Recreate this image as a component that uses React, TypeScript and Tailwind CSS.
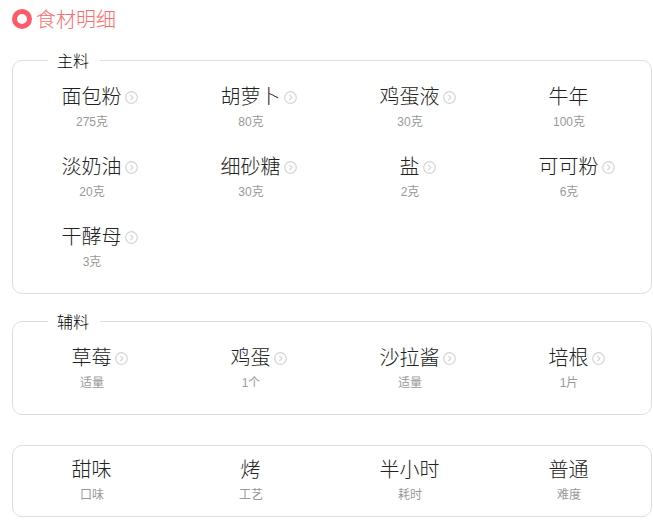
type Item = { name: string; sub: string; arrow?: boolean };

const mainItems: Item[] = [
  { name: "面包粉", sub: "275克", arrow: true },
  { name: "胡萝卜", sub: "80克", arrow: true },
  { name: "鸡蛋液", sub: "30克", arrow: true },
  { name: "牛年", sub: "100克" },
  { name: "淡奶油", sub: "20克", arrow: true },
  { name: "细砂糖", sub: "30克", arrow: true },
  { name: "盐", sub: "2克", arrow: true },
  { name: "可可粉", sub: "6克", arrow: true },
  { name: "干酵母", sub: "3克", arrow: true },
];

const sideItems: Item[] = [
  { name: "草莓", sub: "适量", arrow: true },
  { name: "鸡蛋", sub: "1个", arrow: true },
  { name: "沙拉酱", sub: "适量", arrow: true },
  { name: "培根", sub: "1片", arrow: true },
];

const infoItems: Item[] = [
  { name: "甜味", sub: "口味" },
  { name: "烤", sub: "工艺" },
  { name: "半小时", sub: "耗时" },
  { name: "普通", sub: "难度" },
];

function Arrow() {
  return (
    <svg
      viewBox="0 0 13 13"
      className="absolute left-full top-[10px] ml-[3px] h-[13px] w-[13px]"
      fill="none"
      stroke="#d4d4d4"
    >
      <circle cx="6.5" cy="6.5" r="5.8" strokeWidth="1.2" />
      <path d="M5.3 3.9 7.9 6.5 5.3 9.1" strokeWidth="1.1" />
    </svg>
  );
}

function Cell({ item }: { item: Item }) {
  return (
    <div className="flex flex-col items-center">
      <div className="relative h-[30px] text-[20px] font-light leading-[32px] text-[#222]">
        {item.name}
        {item.arrow && <Arrow />}
      </div>
      <div className="ml-px mt-[2px] text-[12px] leading-[18px] text-[#999]">{item.sub}</div>
    </div>
  );
}

function Section({ title, items, className }: { title: string; items: Item[]; className: string }) {
  return (
    <fieldset className={`ml-3 w-[640px] rounded-[10px] border border-[#ddd] ${className}`}>
      <legend className="ml-[35px] pl-[9px] pr-[11px] pt-[4px] text-[16px] font-light leading-[20px] text-black">{title}</legend>
      <div className="-ml-[1px] mt-[9px] grid w-[636px] grid-cols-4 gap-y-[20px] pb-[22px]">
        {items.map((item) => (
          <Cell key={item.name} item={item} />
        ))}
      </div>
    </fieldset>
  );
}

export default function App() {
  return (
    <div className="min-h-[521px] bg-white font-['Liberation_Sans','Noto_Sans_CJK_SC',sans-serif]">
      <div className="flex h-[38px] items-center pl-3">
        <div className="h-[20px] w-[20px] rounded-full border-[5px] border-[#ff5a6a]" />
        <span className="ml-[4px] pt-[2px] text-[20px] font-light text-[#ff6b6b]">食材明细</span>
      </div>
      <Section title="主料" items={mainItems} className="mt-[10px]" />
      <Section title="辅料" items={sideItems} className="mt-[15px]" />
      <div className="ml-3 mt-[30px] w-[640px] rounded-[10px] border border-[#ddd] pb-[12px] pt-[8px]">
        <div className="-ml-[1px] grid w-[636px] grid-cols-4">
          {infoItems.map((item) => (
            <Cell key={item.name} item={item} />
          ))}
        </div>
      </div>
    </div>
  );
}
